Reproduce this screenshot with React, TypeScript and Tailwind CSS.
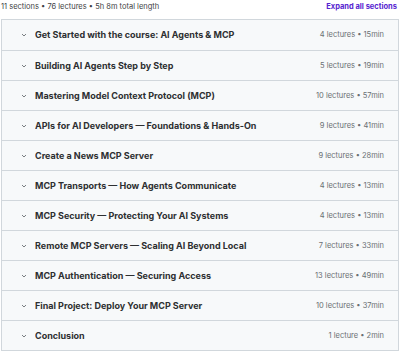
import React from "react";

const sections: [string, string][] = [
  ["Get Started with the course: AI Agents & MCP", "4 lectures • 15min"],
  ["Building AI Agents Step by Step", "5 lectures • 19min"],
  ["Mastering Model Context Protocol (MCP)", "10 lectures • 57min"],
  ["APIs for AI Developers — Foundations & Hands-On", "9 lectures • 41min"],
  ["Create a News MCP Server", "9 lectures • 28min"],
  ["MCP Transports — How Agents Communicate", "4 lectures • 13min"],
  ["MCP Security — Protecting Your AI Systems", "4 lectures • 13min"],
  ["Remote MCP Servers — Scaling AI Beyond Local", "7 lectures • 33min"],
  ["MCP Authentication — Securing Access", "13 lectures • 49min"],
  ["Final Project: Deploy Your MCP Server", "10 lectures • 37min"],
  ["Conclusion", "1 lecture • 2min"],
];

function Chevron() {
  return (
    <svg width="6" height="4" viewBox="0 0 6 4" className="shrink-0">
      <path d="M1 1 L3 3 L5 1" fill="none" stroke="#6a6f73" strokeWidth="0.9" />
    </svg>
  );
}

export default function App() {
  return (
    <div
      className="w-[400px] h-[351px] bg-white overflow-hidden"
      style={{ fontFamily: "Inter, 'Noto Sans', sans-serif" }}
    >
      <div className="flex items-center justify-between h-[19px] pl-[1px] pr-[3px] pb-[5px]">
        <span className="text-[7.5px] text-[#3e4143]">11 sections • 76 lectures • 5h 8m total length</span>
        <span className="text-[7.5px] font-bold text-[#5624d0]">Expand all sections</span>
      </div>
      <div className="mx-[1px] border border-[#d1d7dc]">
        {sections.map(([t, m], i) => (
          <div
            key={i}
            className={`flex items-center h-[30px] bg-[#f7f9fa] pl-[19px] pr-[14px] ${i > 0 ? "border-t border-[#d1d7dc]" : ""}`}
          >
            <Chevron />
            <span className="ml-[8px] text-[9px] font-bold text-[#2d2f31] flex-1 truncate">{t}</span>
            <span className="text-[7.5px] text-[#6a6f73]">{m}</span>
          </div>
        ))}
      </div>
    </div>
  );
}
